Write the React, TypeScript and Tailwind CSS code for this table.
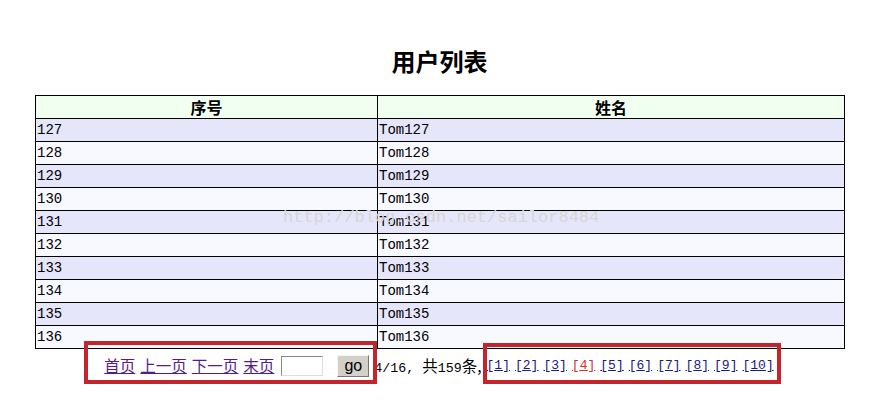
import React from "react";

const rows = [127, 128, 129, 130, 131, 132, 133, 134, 135, 136];
const pages = [1, 2, 3, 4, 5, 6, 7, 8, 9, 10];

const cjk = "font-['Liberation_Mono','Noto_Sans_CJK_SC',monospace]";
const zh = "font-['Noto_Sans_CJK_SC',sans-serif] text-[15.5px]";

export default function App() {
  return (
    <div className={`relative w-[875px] h-[412px] bg-white text-black ${cjk}`}>
      {/* title */}
      <h1 className="pt-[45px] h-[95px] pl-[4px] text-center text-[24px] font-bold font-['Noto_Sans_CJK_SC',sans-serif] leading-[32px]">
        用户列表
      </h1>

      {/* user table */}
      <table className="ml-[35px] w-[810px] border-collapse text-[14px]">
        <thead>
          <tr className="bg-[#f0fff0]">
            <th className="w-[342px] h-[23px] p-0 border border-black text-[16px] font-bold font-['Noto_Sans_CJK_SC',sans-serif] leading-[21px]">
              序号
            </th>
            <th className="h-[23px] p-0 border border-black text-[16px] font-bold font-['Noto_Sans_CJK_SC',sans-serif] leading-[21px]">
              姓名
            </th>
          </tr>
        </thead>
        <tbody>
          {rows.map((n, i) => (
            <tr key={n} className={i % 2 === 0 ? "bg-[#e6e6fa]" : "bg-[#f8f8ff]"}>
              <td className="h-[23px] py-0 pl-[1px] border border-black leading-[21px]">{n}</td>
              <td className="h-[23px] py-0 pl-[1px] border border-black leading-[21px]">Tom{n}</td>
            </tr>
          ))}
        </tbody>
      </table>

      {/* pager */}
      <div className="flex items-center justify-center h-[34px] text-[13px] pl-[3px]">
        <a href="#" className={`text-[#551a8b] underline ${zh}`}>首页</a>
        <a href="#" className={`ml-[5px] text-[#551a8b] underline ${zh}`}>上一页</a>
        <a href="#" className={`ml-[5px] text-[#551a8b] underline ${zh}`}>下一页</a>
        <a href="#" className={`ml-[5px] text-[#551a8b] underline ${zh}`}>末页</a>
        <input
          type="text"
          className="ml-[7px] w-[42px] h-[20px] border border-[#888] border-r-[#ddd] border-b-[#ddd] bg-white"
        />
        <button className="ml-[14px] w-[32px] h-[22px] bg-[#d4d0c8] border border-[#f4f4f4] border-r-[#777] border-b-[#777] text-[16px] leading-[18px] font-['Liberation_Sans',sans-serif]">
          go
        </button>
        <span className="ml-[5px] text-[13.3px]">
          4/16, <span className={zh}>共</span>159<span className={zh}>条,</span>
        </span>
        {pages.map((p) => (
          <a
            key={p}
            href="#"
            className={`ml-[5px] underline ${p === 4 ? "text-[#d03030]" : "text-[#1a1a80]"}`}
          >
            [{p}]
          </a>
        ))}
      </div>

      {/* watermark */}
      <div className="absolute left-[283px] top-[205px] text-[17px] text-[#d6d6d6] font-['Liberation_Mono',monospace] pointer-events-none">
        http://blog.csdn.net/sailor8484
      </div>

      {/* red annotation boxes */}
      <div className="absolute left-[84px] top-[341px] w-[293px] h-[43px] border-[4px] border-[#c4242b]" />
      <div className="absolute left-[483px] top-[343px] w-[298px] h-[41px] border-[4px] border-[#c4242b]" />
    </div>
  );
}
